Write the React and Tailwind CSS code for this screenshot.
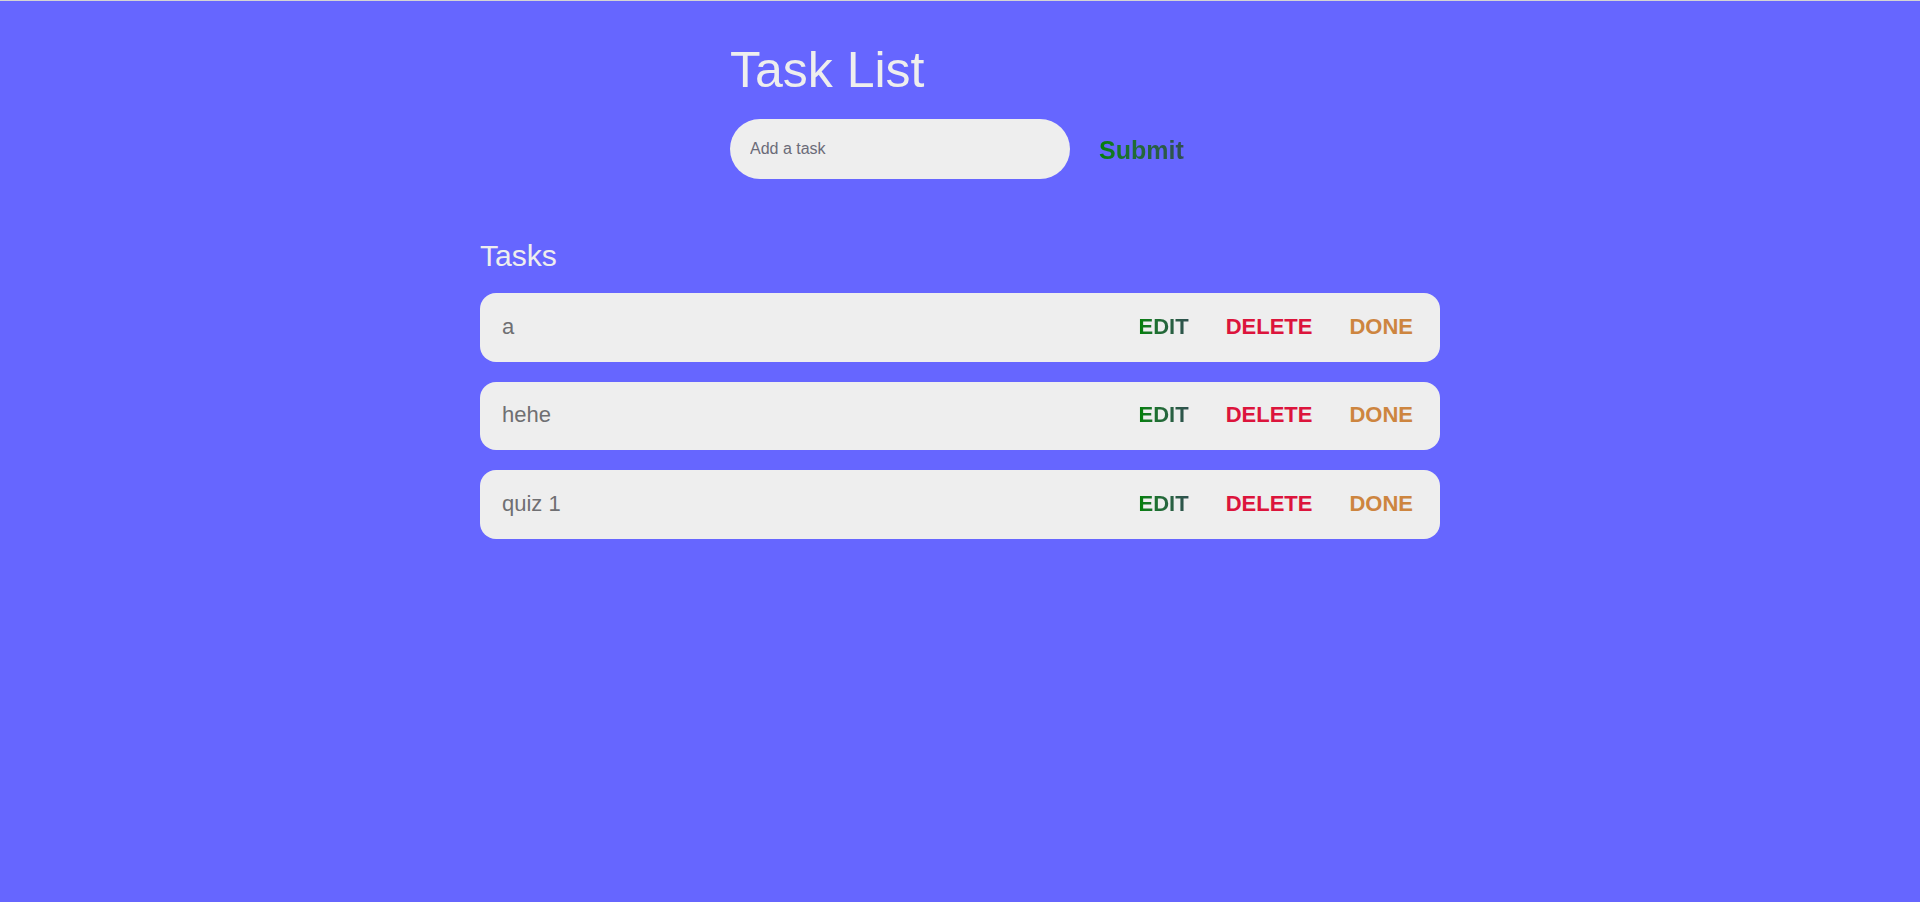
import React, { useState } from "react";

const initialTasks = ["a", "hehe", "quiz 1"];

const TaskRow = ({ text }) => (
  <div className="flex h-[68.5px] items-center justify-between rounded-2xl bg-[#eeeeee] pb-[2px] pl-[22px] pr-[27px]">
    <span className="text-[22px] text-[#6f6f72]">{text}</span>
    <div className="flex items-center gap-[37px] text-[22px] font-bold">
      <button className="bg-linear-to-r from-[#008000] to-[#2f4f4f] bg-clip-text text-transparent">EDIT</button>
      <button className="text-[#dc143c]">DELETE</button>
      <button className="text-[#cd853f]">DONE</button>
    </div>
  </div>
);

export default function App() {
  const [tasks] = useState(initialTasks);
  const [value, setValue] = useState("");

  return (
    <div className="min-h-screen border-t border-[#d4d4d4] bg-[#6666ff] font-['Liberation_Sans',Arial,sans-serif]">
      <div className="mx-auto w-[460px] pt-[42px]">
        <h1 className="text-[50px] leading-[55px] text-[#eeeeee]">Task List</h1>
        <div className="mt-[21px] flex items-center">
          <input
            value={value}
            onChange={(e) => setValue(e.target.value)}
            placeholder="Add a task"
            className="h-[60px] w-[340px] rounded-full bg-[#eeeeee] pl-5 text-base text-[#555] outline-none placeholder:text-[#6b6b78]"
          />
          <button className="ml-[29px] mt-[3px] bg-linear-to-r from-[#008000] to-[#2f4f4f] bg-clip-text text-[25px] font-bold text-transparent">
            Submit
          </button>
        </div>
      </div>

      <div className="mx-auto mt-[61px] w-[960px]">
        <h2 className="text-[30px] leading-[32px] text-[#eeeeee]">Tasks</h2>
        <div className="mt-[21px] flex flex-col gap-5">
          {tasks.map((t) => (
            <TaskRow key={t} text={t} />
          ))}
        </div>
      </div>
    </div>
  );
}
